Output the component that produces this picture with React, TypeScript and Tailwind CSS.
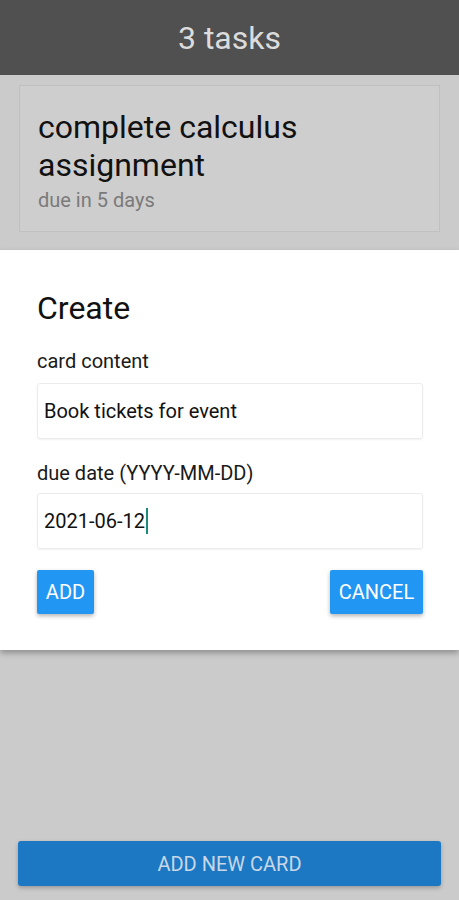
import React from 'react';

const font = { fontFamily: 'Roboto, "Noto Sans", sans-serif' };

export default function App() {
  return (
    <div className="relative h-[900px] w-[459px] overflow-hidden bg-[#cbcbcb]" style={font}>
      {/* Page under the dimmed overlay */}
      <div className="flex h-full flex-col">
        <header className="flex h-[75px] flex-shrink-0 items-center justify-center bg-[#505050]">
          <span className="text-[32px] text-[#dcdcdc]">3 tasks</span>
        </header>

        <div className="mx-[19px] mt-[10px] h-[147px] border border-[#c0c0c0] bg-[#cecece] pl-[18px] pr-[40px] pt-[22px]">
          <div className="text-[32px] leading-[38px] text-[#111]">complete calculus assignment</div>
          <div className="mt-[4px] text-[20px] leading-[24px] text-[#7a7a7a]">due in 5 days</div>
        </div>

        <div className="flex-1" />

        <button className="mx-[18px] mb-[14px] h-[45px] rounded-[3px] bg-[#1c78c3] text-[20px] text-[#c9d7e6] shadow-[0_2px_4px_rgba(0,0,0,0.25)]">
          ADD NEW CARD
        </button>
      </div>

      {/* Create modal */}
      <div className="absolute left-0 right-0 top-[250px] h-[400px] bg-white pl-[37px] pr-[36px] pt-[40px] shadow-[0_3px_6px_rgba(0,0,0,0.3)]">
        <h2 className="text-[32px] leading-[36px] text-[#111]">Create</h2>

        <label className="mt-[23px] block text-[20px] leading-[24px] text-[#1a1a1a]">card content</label>
        <div className="mt-[10px] flex h-[56px] items-center rounded-[3px] border border-[#ececec] px-[6px] text-[20px] text-[#111] shadow-[0_1px_2px_rgba(0,0,0,0.06)]">
          Book tickets for event
        </div>

        <label className="mt-[22px] block text-[20px] leading-[24px] text-[#1a1a1a]">due date (YYYY-MM-DD)</label>
        <div className="mt-[8px] flex h-[56px] items-center rounded-[3px] border border-[#ececec] px-[6px] text-[20px] text-[#111] shadow-[0_1px_2px_rgba(0,0,0,0.06)]">
          2021-06-12
          <span className="ml-[1px] inline-block h-[26px] w-[2px] bg-[#1e8a78]" />
        </div>

        <div className="mt-[21px] flex justify-between">
          <button className="h-[44px] w-[57px] rounded-[2px] bg-[#2196f3] text-[20px] text-white shadow-[0_2px_4px_rgba(0,0,0,0.3)]">
            ADD
          </button>
          <button className="h-[44px] w-[93px] rounded-[2px] bg-[#2196f3] text-[20px] text-white shadow-[0_2px_4px_rgba(0,0,0,0.3)]">
            CANCEL
          </button>
        </div>
      </div>
    </div>
  );
}
